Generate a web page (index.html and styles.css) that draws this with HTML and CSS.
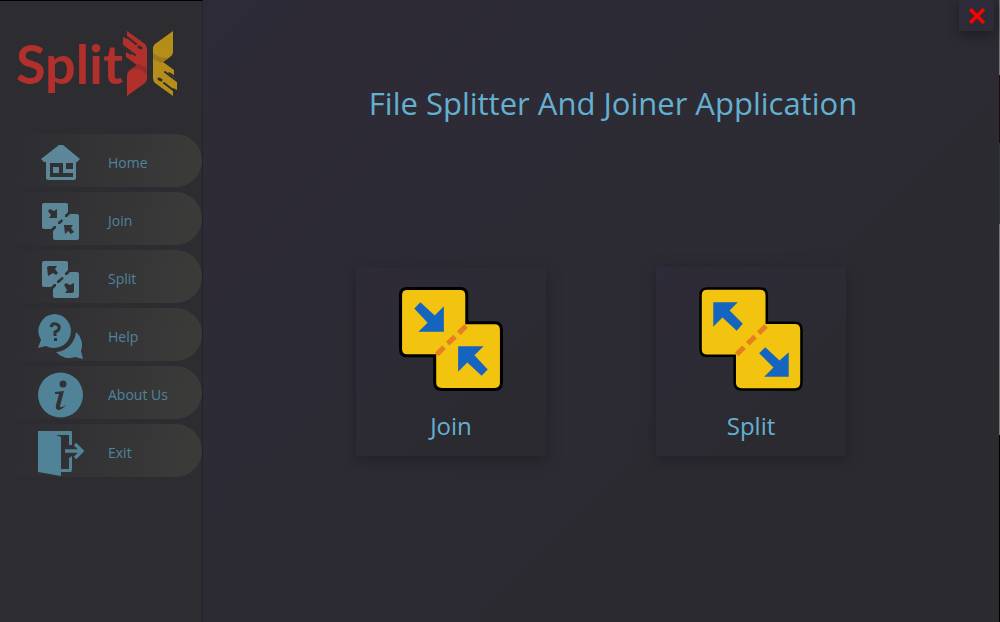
FILE: index.html
```html
<!DOCTYPE html>
<html lang="en">
<head>
<meta charset="utf-8">
<title>SplitX</title>
<link rel="stylesheet" href="styles.css">
</head>
<body>
<div class="app">
  <aside class="sidebar">
    <div class="logo">
      <span class="logo-text">Split</span>
      <svg class="logo-mark" viewBox="-1 0 54 66" aria-hidden="true">
        <defs>
          <path id="wing" d="M3 0 21 13Q23 15 23 18V48Q23 50 21 52L3 65V44Q3 41 6 39L13 34 2 26V21L7 24 8 23 -1 16V6L3 8Z"/>
          <path id="fold" d="M6 39Q14 36 23 43V37L15 33Z"/>
          <g id="slits" fill="none" stroke="#2d2c31" stroke-linecap="round">
            <path stroke-width="2" d="M3 6 12 13M-1 15 11 24"/>
            <path stroke-width="3" d="M15 16 17 17"/>
          </g>
        </defs>
        <use href="#wing" fill="#b1302b"/>
        <use href="#fold" fill="#982b28"/>
        <use href="#slits"/>
        <g transform="rotate(180 26 32.5)">
          <use href="#wing" fill="#b58d19"/>
          <use href="#fold" fill="#9b7b1c"/>
          <use href="#slits"/>
        </g>
      </svg>
    </div>
    <nav class="menu">
      <button class="item" type="button">
        <svg class="icon" viewBox="0 0 46 46" aria-hidden="true"><path fill="#5b8799" fill-rule="evenodd" d="M21 5H25L42 19 39 22H38V38Q38 40 36 40H10Q8 40 8 38V22H6L3 19ZM12 23V37H35V33H25V23ZM15 27H21V33H15ZM28 23H35V29H28Z"/></svg>
        <span>Home</span>
      </button>
      <button class="item" type="button">
        <svg class="icon" viewBox="0 0 46 46" aria-hidden="true"><path fill="#5b8799" d="M6 5H28Q30 5 30 7V14L27 17V19H29L32 16H39Q41 16 41 18V40Q41 42 39 42H17Q15 42 15 40V33L18 30V28H16L13 31H6Q4 31 4 29V7Q4 5 6 5Z"/><path fill="#313133" d="M10 13 12 11 14 12 16 13 19 11V20H11L13 17ZM20 24 24 21 25 23 22 26H20ZM26 27H35L33 30 36 34 33 36 30 33 27 36Z"/></svg>
        <span>Join</span>
      </button>
      <button class="item" type="button">
        <svg class="icon" viewBox="0 0 46 46" aria-hidden="true"><path fill="#5b8799" d="M6 5H28Q30 5 30 7V14L27 17V19H29L32 16H39Q41 16 41 18V40Q41 42 39 42H17Q15 42 15 40V33L18 30V28H16L13 31H6Q4 31 4 29V7Q4 5 6 5Z"/><path fill="#313133" d="M9 11 11 10H19L17 13 20 17 18 19 15 17 10 20ZM19 25 24 21 26 22 21 27H19ZM26 29 28 27 32 29 36 27V36L34 37H27L29 34Z"/></svg>
        <span>Split</span>
      </button>
      <button class="item" type="button">
        <svg class="icon" viewBox="0 0 46 46" aria-hidden="true"><path fill="#508298" d="M17 0A17 17 0 1 1 8 32L0 34 3 26A17 17 0 0 1 17 0ZM38 18A17 17 0 0 1 43 37L45 45 37 43A17 17 0 0 1 18 38 22 22 0 0 0 38 18Z"/><path fill="none" stroke="#323233" stroke-width="3" d="M13 13Q14 9 18 10T21 15Q20 17 17 18V22"/><path fill="#323233" d="M16 24H19V27H16Z"/></svg>
        <span>Help</span>
      </button>
      <button class="item" type="button">
        <svg class="icon" viewBox="0 0 46 46" aria-hidden="true"><circle cx="22.500" cy="23" r="22.500" fill="#508298"/><circle cx="25" cy="12" r="3.500" fill="#323233"/><path fill="#323233" d="M17 20 26 19 22 34Q22 37 28 33 24 38 20 38 17 37 18 33L21 22H17Z"/></svg>
        <span>About Us</span>
      </button>
      <button class="item" type="button">
        <svg class="icon" viewBox="0 0 46 46" aria-hidden="true"><path fill="#508298" d="M1 1H33Q34 1 34 2V15H31V5H18L23 7V39H31V28L34 26V39Q34 42 33 42H23V46L0 42V1Z"/><path fill="none" stroke="#508298" stroke-width="3.500" d="M27 21H43M37 14 44 21 37 28"/></svg>
        <span>Exit</span>
      </button>
    </nav>
  </aside>
  <main class="content">
    <button class="close" type="button" aria-label="Close">
      <svg viewBox="0 0 14 14" aria-hidden="true"><path stroke="#f00" stroke-width="3" d="M1 1 13 13M13 1 1 13"/></svg>
    </button>
    <h1 class="title">File Splitter And Joiner Application</h1>
    <div class="cards">
      <button class="card" type="button">
        <svg class="art" viewBox="1 1 102 102" aria-hidden="true">
          <path fill="#f2c40f" stroke="#000" stroke-width="3" d="M9 2.500H61Q67.500 2.500 67.500 9V36H95Q101.500 36 101.500 43V95Q101.500 101.500 95 101.500H43Q36 101.500 36 95V68.500H9Q2.500 68.500 2.500 62V9Q2.500 2.500 9 2.500Z"/>
          <path fill="none" stroke="#e67e22" stroke-width="5" stroke-dasharray="10 5" d="M38 67 67 39"/>
          <path fill="#1565c0" d="M16 22 22 16 36 29 45 20V45H20L29 36ZM59 59H84L75 68 88 82 82 88 68 75 59 84Z"/>
        </svg>
        <span>Join</span>
      </button>
      <button class="card" type="button">
        <svg class="art" viewBox="1 1 102 102" aria-hidden="true">
          <path fill="#f2c40f" stroke="#000" stroke-width="2.500" d="M9 2.500H61Q67.500 2.500 67.500 9V36H95Q101.500 36 101.500 43V95Q101.500 101.500 95 101.500H43Q36 101.500 36 95V68.500H9Q2.500 68.500 2.500 62V9Q2.500 2.500 9 2.500Z"/>
          <path fill="none" stroke="#e67e22" stroke-width="5" stroke-dasharray="10 5" d="M38 67 67 39"/>
          <path fill="#1565c0" d="M15 16H39L31 24 44 37 38 44 24 31 15 40ZM60 66 66 60 80 73 89 65V89H65L74 80Z"/>
        </svg>
        <span>Split</span>
      </button>
    </div>
  </main>
</div>
</body>
</html>
```
FILE: styles.css
```css
* { box-sizing: border-box; }
body { margin: 0; font-family: "Open Sans", "Noto Sans", sans-serif; background: #2d2c31; }
button { font: inherit; border: 0; padding: 0; cursor: pointer; }
.app { display: grid; grid-template-columns: 203px 1fr; min-height: 100vh; padding-right: 1px; background: linear-gradient(#777 0 12%, #200c0e 12% 23%, #303535 23% 36%, #777 36% 70%, #000 70%); }
.sidebar { background: #2d2c31; border-top: 1px solid #000; border-right: 1px solid #232226; }
.logo { display: flex; align-items: center; height: 133px; padding: 0 0 8px 16px; }
.logo-text { width: 107px; font: 700 54px/66px Lato, sans-serif; color: #b1302b; }
.logo-mark { width: 54px; height: 66px; }
.menu { display: flex; flex-direction: column; gap: 5px; }
.item { display: flex; align-items: center; gap: 24px; height: 53px; padding: 4px 0 0 38px; border-radius: 27px; background: linear-gradient(100deg, #2d2c31 5%, #3a3a39 90%); color: #4e849e; font-size: 14px; text-align: left; }
.icon { width: 46px; height: 46px; }
.content { display: flex; flex-direction: column; align-items: center; background: linear-gradient(135deg, #2e2b38, #2b2a2e); color: #64b0d0; }
.close { align-self: flex-end; display: grid; place-items: center; width: 35px; height: 31px; margin-right: 5px; background: #2d2b37; box-shadow: 0 4px 12px #1f1e23; }
.close svg { width: 16px; height: 16px; }
.title { margin: 48px 0 0; padding-left: 24px; font-size: 31px; line-height: 48px; font-weight: 400; text-align: center; }
.cards { display: flex; flex-wrap: wrap; justify-content: center; gap: 110px; margin-top: 140px; }
.card { display: flex; flex-direction: column; align-items: center; width: 190px; padding: 20px 0 12px; gap: 17px; background: linear-gradient(135deg, #2e2b38, #2b2a2e); box-shadow: 0 4px 12px #222126; color: inherit; font-size: 24px; line-height: 36px; }
.art { width: 104px; height: 104px; }
```
